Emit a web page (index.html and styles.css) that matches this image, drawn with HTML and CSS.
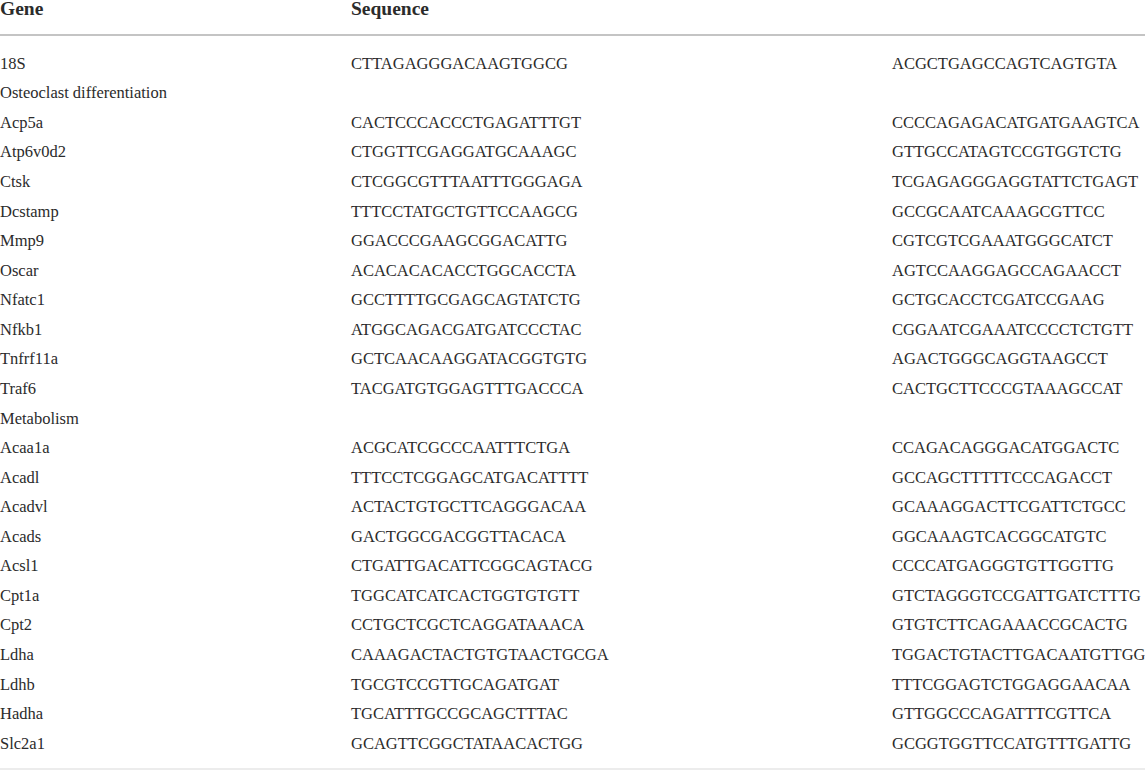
FILE: index.html
```html
<!DOCTYPE html>
<html>
<head>
<meta charset="utf-8">
<link rel="stylesheet" href="styles.css">
</head>
<body>
<table class="primers">
<thead>
<tr><th class="c1">Gene</th><th class="c2">Sequence</th><th class="c3"></th></tr>
</thead>
<tbody>
<tr class="first"><td>18S</td><td>CTTAGAGGGACAAGTGGCG</td><td>ACGCTGAGCCAGTCAGTGTA</td></tr>
<tr><td>Osteoclast differentiation</td><td></td><td></td></tr>
<tr><td>Acp5a</td><td>CACTCCCACCCTGAGATTTGT</td><td>CCCCAGAGACATGATGAAGTCA</td></tr>
<tr><td>Atp6v0d2</td><td>CTGGTTCGAGGATGCAAAGC</td><td>GTTGCCATAGTCCGTGGTCTG</td></tr>
<tr><td>Ctsk</td><td>CTCGGCGTTTAATTTGGGAGA</td><td>TCGAGAGGGAGGTATTCTGAGT</td></tr>
<tr><td>Dcstamp</td><td>TTTCCTATGCTGTTCCAAGCG</td><td>GCCGCAATCAAAGCGTTCC</td></tr>
<tr><td>Mmp9</td><td>GGACCCGAAGCGGACATTG</td><td>CGTCGTCGAAATGGGCATCT</td></tr>
<tr><td>Oscar</td><td>ACACACACACCTGGCACCTA</td><td>AGTCCAAGGAGCCAGAACCT</td></tr>
<tr><td>Nfatc1</td><td>GCCTTTTGCGAGCAGTATCTG</td><td>GCTGCACCTCGATCCGAAG</td></tr>
<tr><td>Nfkb1</td><td>ATGGCAGACGATGATCCCTAC</td><td>CGGAATCGAAATCCCCTCTGTT</td></tr>
<tr><td>Tnfrf11a</td><td>GCTCAACAAGGATACGGTGTG</td><td>AGACTGGGCAGGTAAGCCT</td></tr>
<tr><td>Traf6</td><td>TACGATGTGGAGTTTGACCCA</td><td>CACTGCTTCCCGTAAAGCCAT</td></tr>
<tr><td>Metabolism</td><td></td><td></td></tr>
<tr><td>Acaa1a</td><td>ACGCATCGCCCAATTTCTGA</td><td>CCAGACAGGGACATGGACTC</td></tr>
<tr><td>Acadl</td><td>TTTCCTCGGAGCATGACATTTT</td><td>GCCAGCTTTTTCCCAGACCT</td></tr>
<tr><td>Acadvl</td><td>ACTACTGTGCTTCAGGGACAA</td><td>GCAAAGGACTTCGATTCTGCC</td></tr>
<tr><td>Acads</td><td>GACTGGCGACGGTTACACA</td><td>GGCAAAGTCACGGCATGTC</td></tr>
<tr><td>Acsl1</td><td>CTGATTGACATTCGGCAGTACG</td><td>CCCCATGAGGGTGTTGGTTG</td></tr>
<tr><td>Cpt1a</td><td>TGGCATCATCACTGGTGTGTT</td><td>GTCTAGGGTCCGATTGATCTTTG</td></tr>
<tr><td>Cpt2</td><td>CCTGCTCGCTCAGGATAAACA</td><td>GTGTCTTCAGAAACCGCACTG</td></tr>
<tr><td>Ldha</td><td>CAAAGACTACTGTGTAACTGCGA</td><td>TGGACTGTACTTGACAATGTTGG</td></tr>
<tr><td>Ldhb</td><td>TGCGTCCGTTGCAGATGAT</td><td>TTTCGGAGTCTGGAGGAACAA</td></tr>
<tr><td>Hadha</td><td>TGCATTTGCCGCAGCTTTAC</td><td>GTTGGCCCAGATTTCGTTCA</td></tr>
<tr class="last"><td>Slc2a1</td><td>GCAGTTCGGCTATAACACTGG</td><td>GCGGTGGTTCCATGTTTGATTG</td></tr>
</tbody>
</table>
</body>
</html>
```
FILE: styles.css
```css
html, body {
  margin: 0;
  padding: 0;
  background: #fff;
}
body {
  font-family: "Liberation Serif", "DejaVu Serif", serif;
  color: #2b2b2b;
  width: 1145px;
  height: 770px;
  overflow: hidden;
}
.primers {
  width: 1145px;
  border-collapse: collapse;
  table-layout: fixed;
}
.primers th {
  font-size: 19.5px;
  font-weight: bold;
  text-align: left;
  vertical-align: top;
  height: 34px;
  padding: 0;
  line-height: 18px;
  border-bottom: 2px solid #c4c4c4;
}
.c1 { width: 351px; }
.c2 { width: 541px; }
.primers td {
  font-size: 16.5px;
  padding: 0;
  height: 29.57px;
  line-height: 18px;
  vertical-align: middle;
  white-space: nowrap;
}
.primers tr.first td {
  padding-top: 13px;
}
.primers tr.last td {
  padding-bottom: 9px;
  border-bottom: 2px solid #ececec;
}
```
